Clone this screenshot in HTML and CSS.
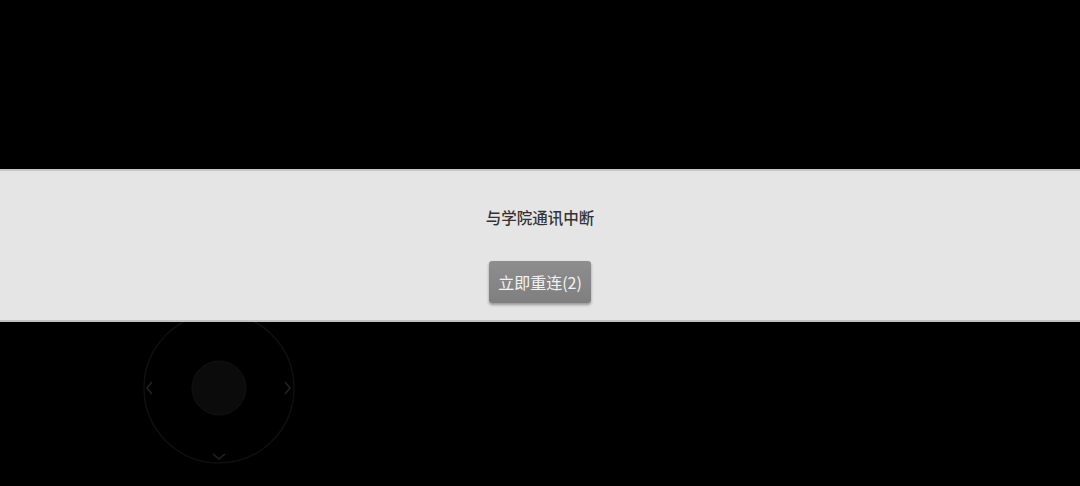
FILE: index.html
```html
<!DOCTYPE html>
<html lang="zh">
<head>
<meta charset="utf-8">
<link rel="stylesheet" href="styles.css">
</head>
<body>
<div class="screen">
  <svg class="joystick" width="160" height="160" viewBox="0 0 160 160">
    <circle cx="80" cy="80" r="75" fill="none" stroke="#0f0f0f" stroke-width="1.5"/>
    <circle cx="80" cy="80" r="27" fill="#0b0b0b" stroke="#121212" stroke-width="1"/>
    <path d="M13 74 L8 80 L13 86" fill="none" stroke="#222" stroke-width="1.6"/>
    <path d="M146 74 L151 80 L146 86" fill="none" stroke="#222" stroke-width="1.6"/>
    <path d="M74 146 L80 151 L86 146" fill="none" stroke="#222" stroke-width="1.6"/>
  </svg>
  <div class="banner">
    <div class="message">与学院通讯中断</div>
    <button class="reconnect">立即重连(2)</button>
  </div>
</div>
</body>
</html>
```
FILE: styles.css
```css
html, body {
  margin: 0;
  padding: 0;
  background: #000;
}
.screen {
  position: relative;
  width: 1080px;
  height: 486px;
  background: #000;
  overflow: hidden;
  font-family: "Noto Sans CJK SC", "Noto Sans", sans-serif;
  padding-top: 169px;
  box-sizing: border-box;
}
.joystick {
  position: absolute;
  left: 139px;
  top: 308px;
}
.banner {
  position: relative;
  height: 153px;
  box-sizing: border-box;
  background: #e5e5e5;
  border-top: 2px solid #c6c6c6;
  border-bottom: 2px solid #c2c2c2;
  display: flex;
  flex-direction: column;
  align-items: center;
  padding-top: 36px;
}
.message {
  font-size: 15.5px;
  line-height: 20px;
  color: #333;
  font-weight: 500;
}
.reconnect {
  margin-top: 34px;
  width: 102px;
  height: 42px;
  border: none;
  border-radius: 3px;
  background: linear-gradient(#8e8e8e, #7f7f7f);
  box-shadow: 0 2px 3px rgba(0,0,0,0.35);
  color: #f2f2f2;
  font-family: "Noto Sans CJK SC", "Noto Sans", sans-serif;
  font-size: 16px;
  padding: 0;
  line-height: 42px;
}
```
